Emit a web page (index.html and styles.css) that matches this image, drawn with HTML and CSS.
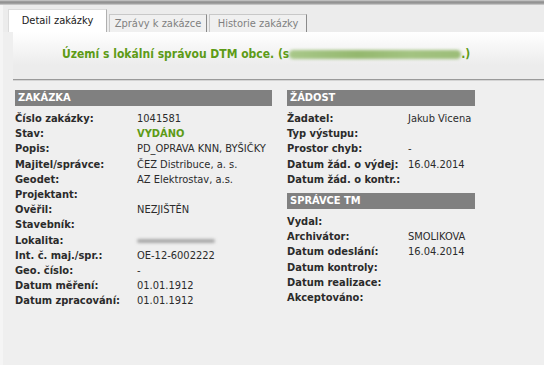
FILE: index.html
```html
<!DOCTYPE html>
<html lang="cs">
<head>
    <meta charset="UTF-8">
    <title>Detail zakázky</title>
    <link rel="stylesheet" href="styles.css">
</head>
<body>
    <div class="topbar"></div>
    <div class="page">
        <div class="tabs">
            <div class="tab active">Detail zakázky</div>
            <div class="tab">Zprávy k zakázce</div>
            <div class="tab">Historie zakázky</div>
        </div>

        <div class="notice">
            <span class="notice-text">Území s lokální správou DTM obce. (s<span class="smudge green"></span>.)</span>
        </div>

        <div class="content">
            <div class="column left">
                <div class="section">
                    <div class="section-title">ZAKÁZKA</div>
                    <div class="row"><span class="label">Číslo zakázky:</span><span class="value">1041581</span></div>
                    <div class="row"><span class="label">Stav:</span><span class="value status">VYDÁNO</span></div>
                    <div class="row"><span class="label">Popis:</span><span class="value">PD_OPRAVA KNN, BYŠIČKY</span></div>
                    <div class="row"><span class="label">Majitel/správce:</span><span class="value">ČEZ Distribuce, a. s.</span></div>
                    <div class="row"><span class="label">Geodet:</span><span class="value">AZ Elektrostav, a.s.</span></div>
                    <div class="row"><span class="label">Projektant:</span><span class="value"></span></div>
                    <div class="row"><span class="label">Ověřil:</span><span class="value">NEZJIŠTĚN</span></div>
                    <div class="row"><span class="label">Stavebník:</span><span class="value"></span></div>
                    <div class="row"><span class="label">Lokalita:</span><span class="value"><span class="smudge gray"></span></span></div>
                    <div class="row"><span class="label">Int. č. maj./spr.:</span><span class="value">OE-12-6002222</span></div>
                    <div class="row"><span class="label">Geo. číslo:</span><span class="value">-</span></div>
                    <div class="row"><span class="label">Datum měření:</span><span class="value">01.01.1912</span></div>
                    <div class="row"><span class="label">Datum zpracování:</span><span class="value">01.01.1912</span></div>
                </div>
            </div>

            <div class="column right">
                <div class="section">
                    <div class="section-title">ŽÁDOST</div>
                    <div class="row"><span class="label">Žadatel:</span><span class="value">Jakub Vicena</span></div>
                    <div class="row"><span class="label">Typ výstupu:</span><span class="value"></span></div>
                    <div class="row"><span class="label">Prostor chyb:</span><span class="value">-</span></div>
                    <div class="row"><span class="label">Datum žád. o výdej:</span><span class="value">16.04.2014</span></div>
                    <div class="row"><span class="label">Datum žád. o kontr.:</span><span class="value"></span></div>
                </div>
                <div class="section">
                    <div class="section-title">SPRÁVCE TM</div>
                    <div class="row"><span class="label">Vydal:</span><span class="value"></span></div>
                    <div class="row"><span class="label">Archivátor:</span><span class="value">SMOLIKOVA</span></div>
                    <div class="row"><span class="label">Datum odeslání:</span><span class="value">16.04.2014</span></div>
                    <div class="row"><span class="label">Datum kontroly:</span><span class="value"></span></div>
                    <div class="row"><span class="label">Datum realizace:</span><span class="value"></span></div>
                    <div class="row"><span class="label">Akceptováno:</span><span class="value"></span></div>
                </div>
            </div>
        </div>
    </div>
</body>
</html>
```

FILE: styles.css
```css
body {
    margin: 0;
    background-color: #efefef;
    font-family: Tahoma, "DejaVu Sans Condensed", "DejaVu Sans", sans-serif;
    font-size: 11px;
    color: #2b2b2b;
    height: 365px;
    overflow: hidden;
}

.topbar {
    height: 5px;
    background: linear-gradient(#d0d0d0, #8c8c8c 40%, #a8a8a8 80%, #e0e0e0);
}

.page {
    border-left: 3px solid #f5f5f5;
    height: 360px;
}

.tabs {
    display: flex;
    align-items: flex-end;
    gap: 2px;
    padding: 4px 0 0 5px;
    height: 23px;
    background-color: #ececec;
}

.tab {
    width: 96px;
    height: 17px;
    line-height: 17px;
    text-align: center;
    color: #808080;
    background-color: #f0f0f0;
    border: 1px solid #c8c8c8;
    border-right-color: #8a8a8a;
    border-bottom: none;
}

.tab.active {
    height: 22px;
    line-height: 22px;
    color: #1a1a1a;
    background-color: #fff;
    border-color: #dcdcdc;
    border-right-color: #b0b0b0;
    width: 97px;
}

.notice {
    margin-left: 10px;
    height: 47px;
    background: linear-gradient(#ffffff, #ececec 70%);
    border-bottom: 1px solid #9a9a9a;
    box-shadow: 0 1px 0 #d4d4d4;
    padding-left: 49px;
}

.notice-text {
    display: inline-block;
    margin-top: 15px;
    font-size: 12px;
    font-weight: bold;
    color: #5d9b17;
}

.smudge {
    display: inline-block;
    border-radius: 5px;
    filter: blur(1.5px);
    vertical-align: middle;
}

.smudge.green {
    width: 172px;
    height: 9px;
    background: linear-gradient(90deg, #a9c88a, #94b86e 40%, #a3c381 70%, #9cbd78);
}

.smudge.gray {
    width: 78px;
    height: 4px;
    background-color: #a8a8a8;
}

.content {
    display: flex;
    gap: 15px;
    padding: 10px 0 0 12px;
}

.column.left {
    width: 257px;
}

.column.right {
    width: 188px;
}

.section {
    margin-bottom: 6px;
}

.section-title {
    height: 16px;
    line-height: 16px;
    padding-left: 3px;
    margin-bottom: 5px;
    background-color: #808080;
    color: #fff;
    font-weight: bold;
}

.row {
    display: flex;
    height: 15.2px;
    line-height: 15px;
    white-space: nowrap;
}

.label {
    width: 122px;
    flex-shrink: 0;
    font-weight: bold;
}

.right .label {
    width: 121px;
}

.status {
    font-weight: bold;
    color: #5d9b17;
}
```
